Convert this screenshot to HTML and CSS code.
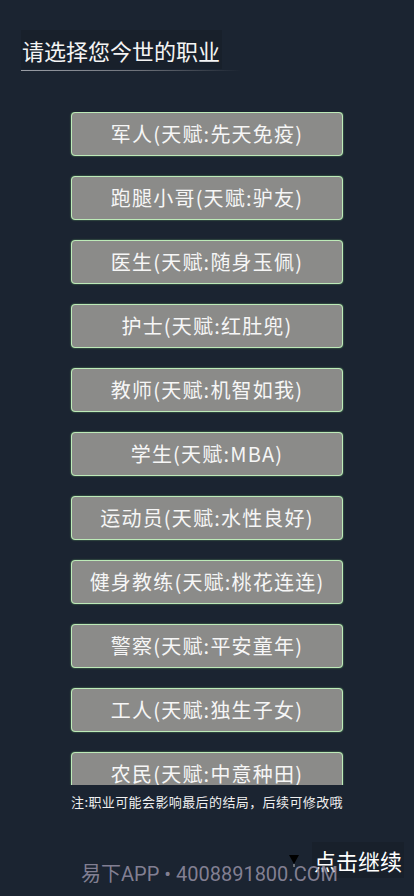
FILE: index.html
```html
<!DOCTYPE html>
<html lang="zh-CN">
<head>
<meta charset="utf-8">
<title>选择职业</title>
<link rel="stylesheet" href="styles.css">
</head>
<body>
<div class="page">
  <header class="head">
    <h1 class="title">请选择您今世的职业</h1>
    <div class="rule"></div>
  </header>

  <div class="list">
    <button class="job">军人(天赋:先天免疫)</button>
    <button class="job">跑腿小哥(天赋:驴友)</button>
    <button class="job">医生(天赋:随身玉佩)</button>
    <button class="job">护士(天赋:红肚兜)</button>
    <button class="job">教师(天赋:机智如我)</button>
    <button class="job">学生(天赋:MBA)</button>
    <button class="job">运动员(天赋:水性良好)</button>
    <button class="job">健身教练(天赋:桃花连连)</button>
    <button class="job">警察(天赋:平安童年)</button>
    <button class="job">工人(天赋:独生子女)</button>
    <button class="job">农民(天赋:中意种田)</button>
  </div>

  <p class="note">注:职业可能会影响最后的结局，后续可修改哦</p>

  <footer class="foot">
    <span class="pointer">
      <svg width="12" height="20" viewBox="0 0 12 20">
        <path d="M1 1 L11 1 L6 10 Z" fill="#000"/>
        <path d="M6 10 L6 13" stroke="#bbb" stroke-width="1"/>
      </svg>
    </span>
    <span class="next">点击继续</span>
  </footer>

  <div class="mark">易下APP • 4008891800.COM</div>
</div>
</body>
</html>
```

FILE: styles.css
```css
html, body {
  margin: 0;
  padding: 0;
  background: #1b2431;
}

body {
  font-family: "Noto Sans CJK SC", "Noto Sans", sans-serif;
  color: #f2f2f2;
}

.page {
  position: relative;
  width: 414px;
  height: 896px;
  overflow: hidden;
}

.head {
  padding: 30px 0 0 21px;
}

.title {
  display: inline-block;
  margin: 0;
  padding: 5px 2px 4px 1px;
  background: #18202b;
  font-size: 22px;
  font-weight: 400;
  line-height: 30px;
  color: #f4f4f4;
}

.rule {
  width: 220px;
  height: 1px;
  margin-top: 1px;
  background: linear-gradient(to right, #9a9ea6 0%, #6c7078 55%, rgba(80, 84, 92, 0) 100%);
}

.list {
  margin-top: 41px;
  height: 673px;
  overflow: hidden;
  display: flex;
  flex-direction: column;
  align-items: center;
  gap: 20px;
}

.job {
  flex: 0 0 auto;
  width: 272px;
  height: 44px;
  box-sizing: border-box;
  border: 1.5px solid #bdeab8;
  border-radius: 4px;
  background: #8b8b89;
  box-shadow: 0 0 1.5px #7cc078;
  font-family: inherit;
  font-size: 20px;
  letter-spacing: 1.2px;
  color: #f6f6f6;
  padding: 0;
  line-height: 40px;
}

.note {
  margin: 5px 0 0;
  text-align: center;
  font-size: 13px;
  letter-spacing: 0.4px;
  line-height: 24px;
  color: #f0f0f0;
}

.foot {
  position: absolute;
  right: 10px;
  top: 842px;
  display: flex;
  align-items: flex-start;
  gap: 12px;
}

.pointer {
  display: block;
  margin-top: 12px;
}

.pointer svg {
  display: block;
}

.next {
  display: block;
  padding: 0 2px;
  background: #18202b;
  font-size: 22px;
  line-height: 36px;
  color: #ffffff;
}

.mark {
  position: absolute;
  left: 81px;
  top: 860px;
  font-family: "Roboto", "Noto Sans CJK SC", sans-serif;
  font-size: 20px;
  line-height: 28px;
  color: rgba(150, 145, 165, 0.85);
  white-space: nowrap;
  pointer-events: none;
}
```
